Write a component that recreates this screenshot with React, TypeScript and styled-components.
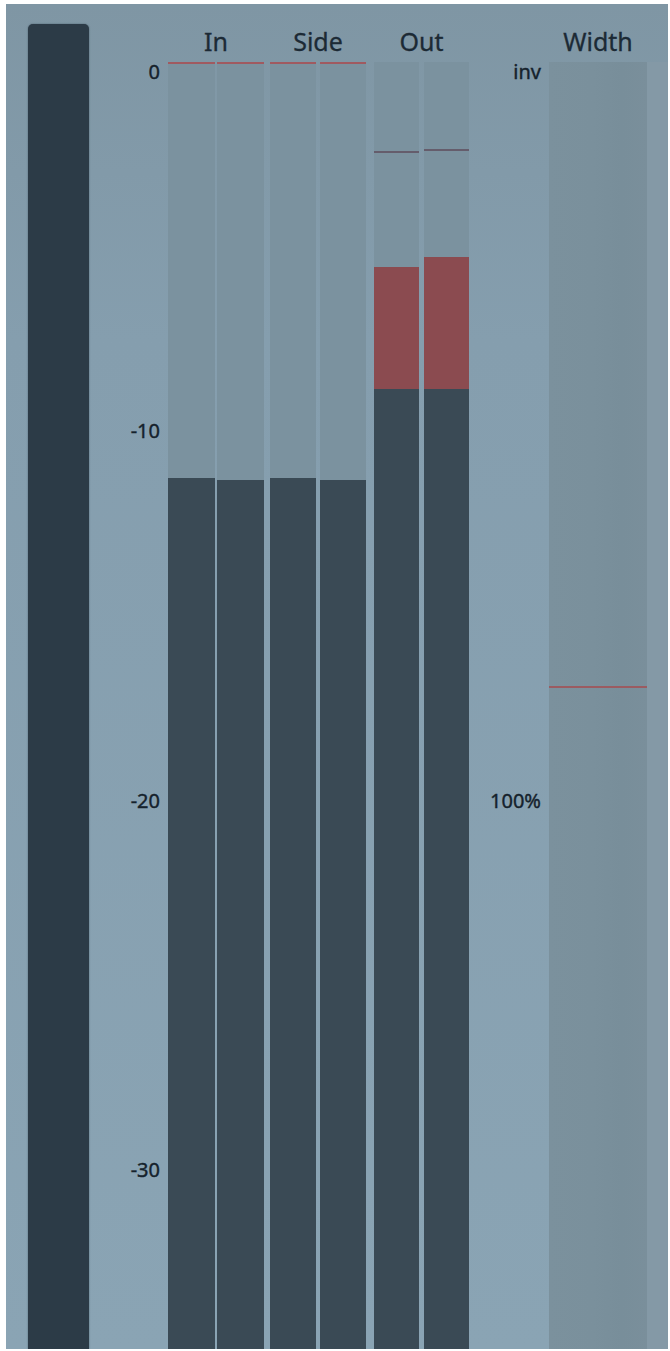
import React from "react";
import styled, { createGlobalStyle } from "styled-components";

const GlobalStyle = createGlobalStyle`
  html, body {
    margin: 0;
    padding: 0;
    background: #ffffff;
  }
  body {
    font-family: "Noto Sans", "DejaVu Sans", sans-serif;
  }
`;

/* meter scale: pixels per dB below the 0 dB top edge */
const PX_PER_DB = 36.95;
const BODY_HEIGHT = 1287.5;
const yOf = (db: number) => -db * PX_PER_DB;

type ChannelData = { level: number; over?: number; hold: number };

const groups: { name: string; gap: number; width: number; offset: number; channels: ChannelData[] }[] = [
  {
    name: "In",
    gap: 2,
    width: 96,
    offset: 0,
    channels: [
      { level: -11.27, hold: 0 },
      { level: -11.33, hold: 0 },
    ],
  },
  {
    name: "Side",
    gap: 4,
    width: 96,
    offset: 6,
    channels: [
      { level: -11.27, hold: 0 },
      { level: -11.33, hold: 0 },
    ],
  },
  {
    name: "Out",
    gap: 5,
    width: 95,
    offset: 8,
    channels: [
      { level: -8.86, over: -5.56, hold: -2.42 },
      { level: -8.86, over: -5.29, hold: -2.37 },
    ],
  },
];

const dbTicks = [0, -10, -20, -30];

const Panel = styled.div`
  margin: 4px 2px 2px 6px;
  height: 1345px;
  display: flex;
  align-items: stretch;
  background: linear-gradient(180deg, #7f96a4 0%, #859eae 25%, #8aa4b4 100%);
  overflow: hidden;
`;

const Fader = styled.div`
  width: 61px;
  margin: 20px 0 0 22px;
  border-radius: 5px 5px 0 0;
  background: #2c3b47;
  box-shadow: 0 0 1.5px rgba(44, 59, 71, 0.8);
`;

const Strip = styled.div<{ $width: number; $offset?: number }>`
  width: ${(p) => p.$width}px;
  margin-left: ${(p) => p.$offset ?? 0}px;
  display: flex;
  flex-direction: column;
`;

const Header = styled.div`
  height: 57.5px;
  flex: none;
  display: flex;
  align-items: flex-end;
  justify-content: center;
  padding-bottom: 4px;
  box-sizing: border-box;
  font-size: 25px;
  line-height: 34px;
  color: #1c2a35;
  -webkit-text-stroke: 0.3px #1c2a35;
`;

const Body = styled.div`
  flex: 1;
  position: relative;
`;

const ScaleLabel = styled.div`
  position: absolute;
  right: 8px;
  font-size: 20px;
  line-height: 20px;
  color: #15222c;
  -webkit-text-stroke: 0.4px #15222c;
  white-space: nowrap;
`;

const ChannelRow = styled.div<{ $gap: number }>`
  height: 100%;
  display: grid;
  grid-template-columns: 1fr 1fr;
  column-gap: ${(p) => p.$gap}px;
`;

const Track = styled.div`
  position: relative;
  height: 100%;
  display: flex;
  flex-direction: column;
  justify-content: flex-end;
  background: #7b929f;
`;

const Segment = styled.div<{ $tone: "level" | "over" }>`
  flex: none;
  background: ${(p) => (p.$tone === "over" ? "#8b4b50" : "#3a4a55")};
`;

const HoldLine = styled.div<{ $tone: "hot" | "dim" }>`
  position: absolute;
  left: 0;
  right: 0;
  height: 2px;
  background: ${(p) => (p.$tone === "hot" ? "#a05a60" : "#655d6c")};
`;

const WidthTrack = styled.div`
  position: relative;
  height: 100%;
  background: linear-gradient(
    90deg,
    #7b919d 0%,
    #7a909c 45%,
    #788e9a 75%,
    #7a8f9b 100%
  );
`;

const WidthMarker = styled.div`
  position: absolute;
  left: 0;
  right: 0;
  height: 2px;
  background: #9b5b61;
`;

const Tail = styled.div`
  flex: 1;
  margin-top: 57.5px;
  background: #8499a6;
`;

function Channel({ level, over, hold }: ChannelData) {
  const levelTop = yOf(level);
  const overTop = over !== undefined ? yOf(over) : levelTop;
  const holdTop = yOf(hold);
  return (
    <Track>
      <HoldLine $tone={hold === 0 ? "hot" : "dim"} style={{ top: holdTop }} />
      {over !== undefined && <Segment $tone="over" style={{ height: levelTop - overTop }} />}
      <Segment $tone="level" style={{ height: BODY_HEIGHT - levelTop }} />
    </Track>
  );
}

function labelTop(y: number) {
  return Math.max(0, y - 10);
}

export default function App() {
  return (
    <>
      <GlobalStyle />
      <Panel>
        <Fader />
        <Strip $width={79}>
          <Header />
          <Body>
            {dbTicks.map((db) => (
              <ScaleLabel key={db} style={{ top: labelTop(yOf(db)) }}>
                {db}
              </ScaleLabel>
            ))}
          </Body>
        </Strip>
        {groups.map((g) => (
          <Strip key={g.name} $width={g.width} $offset={g.offset}>
            <Header>{g.name}</Header>
            <Body>
              <ChannelRow $gap={g.gap}>
                {g.channels.map((c, i) => (
                  <Channel key={i} {...c} />
                ))}
              </ChannelRow>
            </Body>
          </Strip>
        ))}
        <Strip $width={80}>
          <Header />
          <Body>
            <ScaleLabel style={{ top: labelTop(0) }}>inv</ScaleLabel>
            <ScaleLabel style={{ top: labelTop(yOf(-20)) }}>100%</ScaleLabel>
          </Body>
        </Strip>
        <Strip $width={98}>
          <Header>Width</Header>
          <Body>
            <WidthTrack>
              <WidthMarker style={{ top: 624.5 }} />
            </WidthTrack>
          </Body>
        </Strip>
        <Tail />
      </Panel>
    </>
  );
}
